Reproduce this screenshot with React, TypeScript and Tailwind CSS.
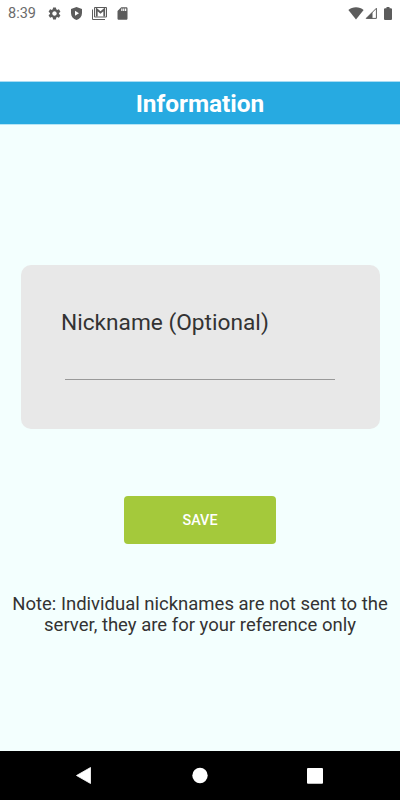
import { MdSettings, MdSdCard } from "react-icons/md";

const PlayShield = () => (
  <svg viewBox="0 0 22 26" className="w-[11px] h-[13px]" fill="currentColor">
    <path
      fillRule="evenodd"
      d="M11 0 0 4v8c0 7 4.600 11.800 11 14 6.400-2.200 11-7 11-14V4L11 0ZM8 7.500v10l8-5-8-5Z"
    />
  </svg>
);

const MailStack = () => (
  <svg viewBox="0 0 30 26" className="w-[15px] h-[13px]" fill="none" stroke="currentColor">
    <path d="M1 5v20H26" strokeWidth="2" />
    <path d="M5 1h24v19H5z" strokeWidth="2" />
    <path d="M9.500 19V4.500l7.500 6.500 7.500-6.500V19" strokeWidth="3.600" />
  </svg>
);

const Wifi = () => (
  <svg viewBox="0 0 32 26" className="w-4 h-[13px]" fill="currentColor">
    <path d="M16 25 .8 5.800C5 2.300 10.200.600 16 .600s11 1.700 15.200 5.200L16 25Z" />
  </svg>
);

const Signal = () => (
  <svg viewBox="0 0 24 24" className="w-3 h-3">
    <path d="M22.800 2.500v20.300H2.500Z" fill="none" stroke="currentColor" strokeWidth="2" />
    <path d="M15 10v13H2Z" fill="currentColor" />
  </svg>
);

const Battery = () => (
  <svg viewBox="0 0 16 26" className="w-2 h-[13px]" fill="currentColor">
    <path d="M5 0h6v2.500h3.500L16 4v20.500L14.500 26h-13L0 24.500V4l1.500-1.500H5Z" />
  </svg>
);

const StatusBar = () => (
  <div className="flex h-[26px] items-center justify-between px-2 text-[#5c5c5c]">
    <div className="flex items-center">
      <span className="w-[39px] pt-[2px] text-[14.500px] leading-none text-[#6b6b6b]">8:39</span>
      <MdSettings className="size-[15px] mr-[9px]" />
      <PlayShield />
      <span className="ml-[10px] mr-2">
        <MailStack />
      </span>
      <MdSdCard className="size-[15px]" />
    </div>
    <div className="flex items-center">
      <span className="-translate-x-px">
        <Wifi />
      </span>
      <span className="mr-[7px]">
        <Signal />
      </span>
      <Battery />
    </div>
  </div>
);

const NavBar = () => (
  <div className="h-[49px] bg-black">
    <svg viewBox="0 0 400 49" className="w-full h-full" fill="white">
      <path d="M76.500 24.500 90.500 16.500v16Z" stroke="white" strokeWidth=".8" strokeLinejoin="round" />
      <circle cx="200" cy="24.500" r="7.700" />
      <rect x="307" y="17" width="16" height="15.700" rx="1" />
    </svg>
  </div>
);

export default function App() {
  return (
    <div className="flex h-[800px] w-[400px] flex-col overflow-hidden bg-white font-['Roboto',sans-serif]">
      <StatusBar />
      <header className="mt-[55px] flex h-[44px] shrink-0 items-center justify-center border-y border-t-[#a9dcf3] border-b-[#b5e5f5] bg-[#27aae1]">
        <h1 className="pt-[3px] text-[24.400px] font-bold leading-none text-white">Information</h1>
      </header>

      <main className="flex flex-1 flex-col items-center bg-[#f3fffe]">
        <section className="mt-[140px] h-[164px] w-[359px] rounded-[10px] bg-[#e8e8e8] px-[40.500px] pt-[44px]">
          <label htmlFor="nickname" className="block text-[22.700px] leading-[28px] text-[#333333]">
            Nickname (Optional)
          </label>
          <input
            id="nickname"
            className="ml-[4px] mt-[8px] block h-[35px] w-[270px] border-b border-[#999999] bg-transparent outline-none"
          />
        </section>

        <button className="mt-[67px] h-[48px] w-[152px] rounded-[4px] bg-[#a4c93b] pt-[2px] text-[14.400px] font-medium text-white">
          SAVE
        </button>

        <p className="mt-[50px] w-[400px] whitespace-nowrap text-center text-[18.500px] leading-[21px] text-[#333333]">
          Note: Individual nicknames are not sent to the
          <br />
          server, they are for your reference only
        </p>
      </main>
      <NavBar />
    </div>
  );
}
